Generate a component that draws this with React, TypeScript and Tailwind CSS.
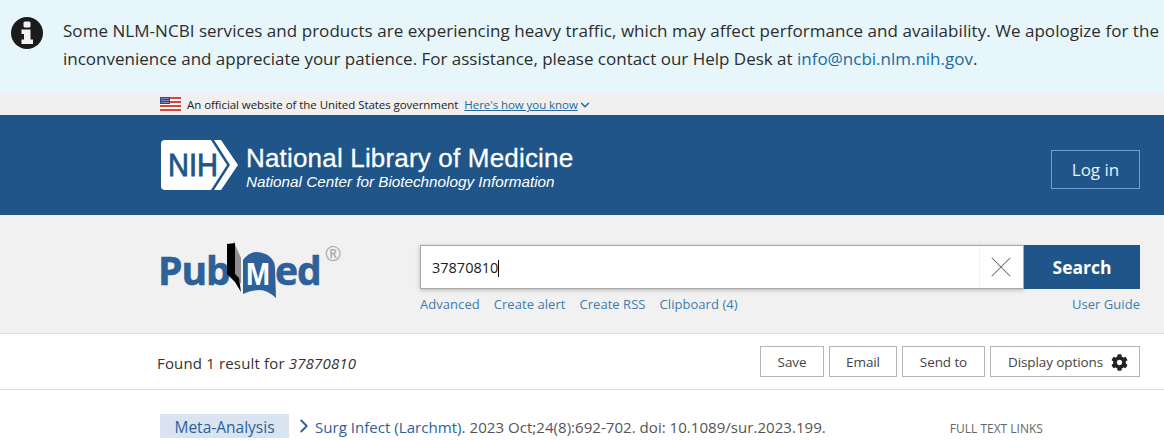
import { X, ChevronDown, ChevronRight } from "lucide-react";
import { FaCog } from "react-icons/fa";

const sans = "font-['Open_Sans','Noto_Sans',sans-serif]";

function Flag() {
  return (
    <svg width="21" height="14" viewBox="0 0 21 14" className="shrink-0">
      <rect width="21" height="14" fill="#fff" />
      <rect width="21" height="2" fill="#d8433b" />
      <rect y="4" width="21" height="2" fill="#d8433b" />
      <rect y="8" width="21" height="2" fill="#d8433b" />
      <rect y="12" width="21" height="2" fill="#d8433b" />
      <rect width="10" height="7" fill="#3c3b8e" />
      <path d="M1.5 1.5h7M1.5 3.5h7M1.5 5.5h7" stroke="#cfd0ee" strokeDasharray="1 1" />
    </svg>
  );
}

function InfoIcon() {
  return (
    <svg width="32" height="32" viewBox="0 0 32 32" className="shrink-0">
      <circle cx="16" cy="16" r="16" fill="#1b1b1b" />
      <rect x="12.5" y="4.5" width="7" height="6" rx="1.5" fill="#f2f2f2" />
      <path d="M10.5 12.5H19.5V22.5H22V27H10.5V22.5H13V17H10.5Z" fill="#f2f2f2" />
    </svg>
  );
}

function NihLogo() {
  return (
    <svg width="78" height="50" viewBox="0 0 78 50" className="shrink-0">
      <path d="M4 0H50L66 25L50 50H4Q0 50 0 46V4Q0 0 4 0Z" fill="#fff" />
      <path d="M53 0H60L77 25L60 50H53L69 25Z" fill="#fff" />
      <text x="7" y="36" fontFamily="Liberation Sans" fontSize="31" fill="#20558a" stroke="#20558a" strokeWidth="0.8" textLength="50" lengthAdjust="spacingAndGlyphs">NIH</text>
    </svg>
  );
}

function PubMedBook() {
  return (
    <svg width="52" height="64" viewBox="0 0 52 64" className="shrink-0">
      <path d="M8 2L16 20V46L10 37V5Z" fill="#8f8f8f" />
      <path d="M2 6L10 5V36L14 40L16 54L10 44L2 36Z" fill="#000" />
      <path d="M18 22Q24 14 32 14Q42 15 46 20Q50 24 50 30L51 60Q42 52 35 52Q26 52 18 56Z" fill="#2c6199" />
      <text x="21" y="47" fontFamily="Liberation Sans" fontWeight="700" fontSize="31" fill="#fff" textLength="24" lengthAdjust="spacingAndGlyphs">M</text>
    </svg>
  );
}

export default function App() {
  return (
    <div className={`${sans} w-[1164px] h-[440px] overflow-hidden bg-white text-[#212121]`}>
      {/* alert */}
      <div className="h-[93px] bg-[#e7f6fa] flex pl-[11px] pt-[17px]">
        <InfoIcon />
        <p className="ml-5 w-[1101px] text-[17px] leading-[28px] tracking-[0.04px] text-[#2d2d2d]">
          <span className="whitespace-nowrap">Some NLM-NCBI services and products are experiencing heavy traffic, which may affect performance and availability. We apologize for the</span>
          <br />
          <span className="tracking-[-0.01px]">
            inconvenience and appreciate your patience. For assistance, please contact our Help Desk at <a className="text-[#20699f]">info@ncbi.nlm.nih.gov</a>.
          </span>
        </p>
      </div>

      {/* gov banner */}
      <div className="h-[22px] bg-[#f0f0f0] flex items-center pl-[160px] text-[11.5px] tracking-[-0.06px] text-[#222]">
        <Flag />
        <span className="ml-[6px] mt-[2px]">An official website of the United States government</span>
        <a className="ml-[6px] mt-[2px] text-[#20699f] underline">Here's how you know</a>
        <ChevronDown className="w-[14px] h-[14px] text-[#20699f] mt-[2px]" strokeWidth={2.5} />
      </div>

      {/* NLM header */}
      <div className="h-[100px] bg-[#20558a] flex items-center pl-[161px] pr-6 text-white">
        <NihLogo />
        <div className="ml-[7px] font-['Liberation_Sans',sans-serif] mt-[4px]">
          <div className="text-[26px] leading-[29px] tracking-[0.18px] [-webkit-text-stroke:0.3px_white]">National Library of Medicine</div>
          <div className="text-[15.25px] leading-[17px] italic">National Center for Biotechnology Information</div>
        </div>
        <button className="ml-auto w-[89px] h-[39px] mt-[8px] pt-[2px] border border-[#6f9fd0] text-[17px] text-[#e6f1fb]">Log in</button>
      </div>

      {/* search */}
      <div className="h-[119px] bg-[#f1f1f1] border-b border-[#dcdcdc] flex pl-[158px] pr-6 pt-[30px]">
        <div className="w-[262px] shrink-0 h-[64px] flex items-start -mt-[7px] text-[#2c6199]">
          <span className="w-[67px] font-bold text-[39px] leading-[64px] tracking-[-1px] [-webkit-text-stroke:0.6px_#2c6199]">Pub</span>
          <PubMedBook />
          <span className="-ml-[2px] font-bold text-[39px] leading-[64px] tracking-[-1px] [-webkit-text-stroke:0.6px_#2c6199]">ed</span>
          <span className="text-[#a9a9a9] text-[20px] leading-[20px] mt-[6px] ml-[4px]">®</span>
        </div>
        <div className="flex-1">
          <div className="flex h-[44px]">
            <div className="flex-1 bg-white border border-[#a8a8a8] shadow-[0_1px_4px_rgba(0,0,0,0.25)] flex items-center">
              <span className="flex-1 pl-[11px] pt-px text-[14.5px] text-[#222]">37870810<span className="inline-block w-px h-[17px] bg-black align-middle" /></span>
              <div className="w-[44px] h-full flex items-center justify-center border-l border-[#f1f1f1]">
                <X className="w-9 h-9 mr-[2px] text-[#666]" strokeWidth={0.7} />
              </div>
            </div>
            <button className="w-[116px] pt-px bg-[#20558a] text-white font-bold text-[17.5px]">Search</button>
          </div>
          <div className="flex gap-[14px] mt-[6px] text-[13px] leading-[18px] tracking-[0.05px] text-[#3d7cae]">
            <a>Advanced</a>
            <a>Create alert</a>
            <a>Create RSS</a>
            <a>Clipboard (4)</a>
            <a className="ml-auto">User Guide</a>
          </div>
        </div>
      </div>

      {/* results bar */}
      <div className="h-[56px] border-b border-[#dcdcdc] flex items-center pl-[157px] pr-6 text-[#333]">
        <p className="text-[15px] tracking-[0.16px] mt-[3px]">Found 1 result for <em>37870810</em></p>
        <div className="ml-auto flex gap-[5px] text-[13.5px] tracking-[-0.1px] text-[#444]">
          <button className="w-[64px] h-[31px] pt-px border border-[#b5b5b5]">Save</button>
          <button className="w-[68px] h-[31px] pt-px border border-[#b5b5b5]">Email</button>
          <button className="w-[83px] h-[31px] pt-px border border-[#b5b5b5]">Send to</button>
          <button className="w-[150px] h-[31px] pt-px border border-[#b5b5b5] flex items-center pl-[17px] gap-[8px]">
            Display options <FaCog className="w-[17px] h-[17px] text-[#222]" />
          </button>
        </div>
      </div>

      {/* article row */}
      <div className="flex items-center pl-[160px] pt-[24px] text-[15.1px]">
        <span className="w-[129px] h-[24px] bg-[#d9e4f0] text-[#2c6199] text-[15.5px] text-center leading-[26px]">Meta-Analysis</span>
        <ChevronRight className="w-[22px] h-[22px] ml-[4px] text-[#2c6199]" strokeWidth={2} />
        <a className="mt-[2px] text-[#2c6199]">Surg Infect (Larchmt).</a>
        <span className="ml-1 mt-[2px] text-[#555]">2023 Oct;24(8):692-702. doi: 10.1089/sur.2023.199.</span>
        <span className="ml-[124px] mt-[5px] text-[12px] text-[#666]">FULL TEXT LINKS</span>
      </div>
    </div>
  );
}
